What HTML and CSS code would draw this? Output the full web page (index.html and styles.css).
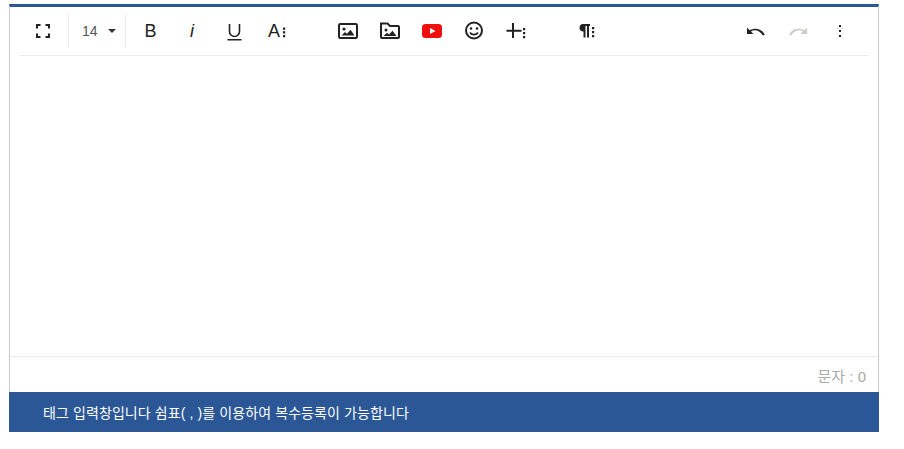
FILE: index.html
```html
<!DOCTYPE html>
<html lang="ko">
<head>
<meta charset="utf-8">
<title>Editor</title>
<link rel="stylesheet" href="styles.css">
</head>
<body>
<div class="editor">
  <div class="toolbar">
    <div class="group first">
      <button class="btn"><svg width="24" height="24" viewBox="0 0 24 24"><path class="stroke" d="M7 9.500V6h3.500M15.500 6H19v3.500M19 14.500V18h-3.500M10.500 18H7v-3.500"/></svg></button>
      <div class="size"><span class="size-num">14</span><span class="caret"></span></div>
      <button class="btn"><svg width="24" height="24" viewBox="0 0 24 24"><text class="glyph" x="12.500" y="18" text-anchor="middle">B</text></svg></button>
      <button class="btn"><svg width="24" height="24" viewBox="0 0 24 24"><text class="glyph-i" x="12" y="18" text-anchor="middle">i</text></svg></button>
      <button class="btn"><svg width="24" height="24" viewBox="0 0 24 24"><path class="thin" d="M7.500 5v7.500a5 5 0 0 0 10 0V5"/><path class="fill" d="M5.500 20h14v1.500h-14z"/></svg></button>
      <button class="btn"><svg width="24" height="24" viewBox="0 0 24 24"><text class="glyph" x="4" y="18">A</text><path class="fill" d="M19 8.500h2.200v2.200H19zM19 12.300h2.200v2.200H19zM19 16h2.200v2.200H19z"/></svg></button>
    </div>
    <div class="group mid">
      <button class="btn"><svg width="24" height="24" viewBox="0 0 24 24"><rect class="box" x="3" y="5" width="18" height="14" rx="1.200"/><circle class="fill" cx="8" cy="10" r="1.600"/><path class="fill" d="M5.500 16.500 9 13l2 1.700 3.500-4 4 5.800z"/></svg></button>
      <button class="btn"><svg width="24" height="24" viewBox="0 0 24 24"><path class="box" d="M3 4.500h6.500L12 7h8a1 1 0 0 1 1 1v10a1 1 0 0 1-1 1H4a1 1 0 0 1-1-1z"/><circle class="fill" cx="8" cy="11" r="1.500"/><path class="fill" d="M5.500 17 9 13.800l2 1.600 3.500-3.600 4 5.200z"/></svg></button>
      <button class="btn"><svg width="24" height="24" viewBox="0 0 24 24"><rect x="2" y="5" width="20" height="14" rx="3.500" fill="#f00f0f"/><path fill="#fff" d="M10 9l5.500 3-5.500 3z"/></svg></button>
      <button class="btn"><svg width="24" height="24" viewBox="0 0 24 24"><circle class="box" cx="12" cy="11.500" r="8"/><circle class="fill" cx="9" cy="9.500" r="1.300"/><circle class="fill" cx="15" cy="9.500" r="1.300"/><path class="thin" d="M8 13.500c1.500 2.800 6.500 2.800 8 0"/></svg></button>
      <button class="btn"><svg width="24" height="24" viewBox="0 0 24 24"><path class="fill" d="M8 4h2v6.800h7.500v2H10V19H8v-6.200H2.500v-2H8z"/><path class="fill" d="M19 9h2.200v2.200H19zM19 13h2.200v2.200H19zM19 17h2.200v2.200H19z"/></svg></button>
    </div>
    <div class="group para">
      <button class="btn"><svg width="24" height="24" viewBox="0 0 24 24"><path class="fill" d="M8.500 5H16v2h-1v11.500h-2V7h-1.500v11.500h-2v-6a3.800 3.800 0 0 1-1-7.500z"/><path class="fill" d="M18 8h2.200v2.200H18zM18 12h2.200v2.200H18zM18 16h2.200v2.200H18z"/></svg></button>
    </div>
    <div class="group right">
      <button class="btn"><svg width="24" height="24" viewBox="0 0 24 24"><path class="fill" d="M3 8.500V15h6.500L7 12.500c3.600-2.400 8.500-1.200 12 4l1.800-.7C18 9.500 11 8.200 5.700 11.200z"/></svg></button>
      <button class="btn"><svg width="24" height="24" viewBox="0 0 24 24"><path class="off" d="M21 8.500V15h-6.500l2.500-2.500C13.400 10.100 8.500 11.300 5 16.500l-1.800-.7C6 9.500 13 8.200 18.300 11.200z"/></svg></button>
      <button class="btn"><svg width="24" height="24" viewBox="0 0 24 24"><path class="fill" d="M11 6h2v2h-2zM11 11h2v2h-2zM11 16h2v2h-2z"/></svg></button>
    </div>
  </div>
  <div class="content"></div>
  <div class="counter">문자 : 0</div>
</div>
<div class="tags">태그 입력창입니다 쉼표( , )를 이용하여 복수등록이 가능합니다</div>
</body>
</html>
```
FILE: styles.css
```css
* { box-sizing: border-box; }
html, body { margin: 0; background: #fff; }
body { padding: 4px 25px 0 9px; font-family: "Liberation Sans", "Noto Sans CJK KR", sans-serif; }
.editor {
  border-top: 3px solid #2b5797;
  border-left: 1px solid #ccc;
  border-right: 1px solid #ccc;
  height: 388px;
  display: flex;
  flex-direction: column;
}
.toolbar {
  height: 49px;
  margin: 0 9px;
  border-bottom: 1px solid #ebebeb;
  display: flex;
  align-items: flex-start;
}
.group { display: flex; align-items: center; height: 48px; }
.first { margin-left: 2px; }
.mid { margin-left: 30px; }
.para { margin-left: 28px; }
.right { margin-left: auto; margin-right: 8px; }
.btn {
  width: 42px;
  height: 48px;
  padding: 0;
  border: 0;
  background: none;
  display: flex;
  align-items: center;
  justify-content: center;
}
.size {
  width: 58px;
  height: 34px;
  margin: 0 3px 0 5px;
  border-left: 1px solid #ebebeb;
  border-right: 1px solid #ebebeb;
  display: flex;
  align-items: center;
  padding-left: 13px;
}
.size-num { font-size: 14px; color: #555; width: 26px; }
.caret {
  width: 0;
  height: 0;
  border-left: 4px solid transparent;
  border-right: 4px solid transparent;
  border-top: 4px solid #333;
}
.fill { fill: #222; }
.off { fill: #cfc9c2; }
.stroke, .box, .thin { fill: none; stroke: #222; }
.stroke { stroke-width: 2; }
.box { stroke-width: 2; }
.thin { stroke-width: 1.600; }
.glyph { font: 18px "Liberation Sans", sans-serif; fill: #222; }
.glyph-i { font: italic 18px "Liberation Sans", sans-serif; fill: #222; }
.content { flex: 1; border-bottom: 1px solid #ebebeb; }
.counter {
  height: 35px;
  padding: 11px 12px 0 0;
  text-align: right;
  font-size: 15px;
  line-height: 17px;
  color: #aaa;
}
.tags {
  height: 40px;
  padding-left: 34px;
  background: #2b5797;
  color: #fff;
  font-size: 14px;
  letter-spacing: 0.1px;
  line-height: 42px;
}
```
